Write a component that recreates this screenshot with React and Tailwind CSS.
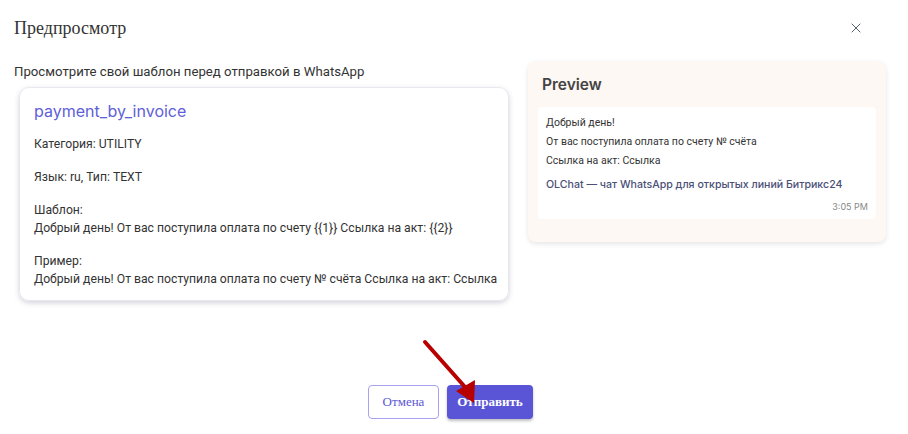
import { X } from "lucide-react";

const body = { fontFamily: "Roboto, 'Noto Sans', sans-serif" };
const head = { fontFamily: "Inter, 'Noto Sans', sans-serif" };
const serif = { fontFamily: "'Liberation Serif', 'DejaVu Serif', serif" };

const App = () => {
  return (
    <div className="w-[908px] h-[434px] bg-white relative overflow-hidden text-[#333]">
      {/* header */}
      <div className="flex items-center justify-between h-[56px] pl-[14px] pr-[44px]">
        <h1 className="text-[18px] text-[#333]" style={serif}>Предпросмотр</h1>
        <X size={16} strokeWidth={1.5} className="text-[#5a6272]" />
      </div>

      <div className="flex gap-[18px] pl-[14px] pr-[22px] pt-[4px]">
        <div className="w-[496px]">
          <p className="text-[13.2px] text-[#333] h-[24px] leading-[24px]" style={body}>
            Просмотрите свой шаблон перед отправкой в WhatsApp
          </p>
          <div className="ml-[5px] mt-[3px] w-[490px] h-[214px] rounded-[10px] border border-[#e8e8f0] shadow-[0_2px_5px_rgba(80,80,120,0.25)] pl-[14px] pr-[6px] pt-[10px]" style={body}>
            <div className="text-[16px] text-[#6060d8] leading-[26px]" style={head}>payment_by_invoice</div>
            <div className="text-[12.2px] leading-[18px] text-[#333] mt-[11px] flex flex-col gap-[15px] whitespace-nowrap">
              <p>Категория: UTILITY</p>
              <p>Язык: ru, Тип: TEXT</p>
              <p>Шаблон:<br />Добрый день! От вас поступила оплата по счету {"{{1}}"} Ссылка на акт: {"{{2}}"}</p>
              <p>Пример:<br />Добрый день! От вас поступила оплата по счету № счёта Ссылка на акт: Ссылка</p>
            </div>
          </div>
        </div>

        <div className="w-[358px] h-[181px] mt-[1px] rounded-[8px] bg-[#fdf8f3] shadow-[0_2px_5px_rgba(0,0,0,0.1)] p-[10px] pt-[13px]">
          <div className="text-[15.5px] font-semibold text-[#444] pl-[4px] leading-[22px]" style={head}>Preview</div>
          <div className="mt-[11px] bg-white rounded-[4px] h-[112px] px-[8px] pt-[6px]" style={body}>
            <div className="text-[10.5px] leading-[19px] text-[#333]">
              <p>Добрый день!</p>
              <p>От вас поступила оплата по счету № счёта</p>
              <p>Ссылка на акт: Ссылка</p>
            </div>
            <p className="text-[10.6px] font-medium text-[#4a5078] mt-[6px] leading-[18px] whitespace-nowrap" style={head}>
              OLChat — чат WhatsApp для открытых линий Битрикс24
            </p>
            <p className="text-[9px] text-[#888] text-right mt-[6px]" style={head}>3:05 PM</p>
          </div>
        </div>
      </div>

      {/* footer */}
      <div className="flex justify-center gap-[8px] mt-[84px] pr-[7px]">
        <button className="w-[71px] h-[34px] rounded-[4px] border border-[#a7a2ef] text-[#5b56d6] text-[13px]" style={serif}>Отмена</button>
        <button className="w-[86px] h-[34px] rounded-[4px] bg-[#5a55d6] text-white text-[13px] font-bold shadow-[0_2px_3px_rgba(0,0,0,0.25)]" style={serif}>Отправить</button>
      </div>

      {/* red arrow annotation */}
      <svg className="absolute left-[418px] top-[336px]" width="70" height="72" viewBox="0 0 70 72">
        <line x1="7" y1="6" x2="47" y2="51" stroke="#b80000" strokeWidth="4" strokeLinecap="round" />
        <polygon points="56,67 38,55 57,44" fill="#b80000" />
      </svg>
    </div>
  );
};

export default App;
